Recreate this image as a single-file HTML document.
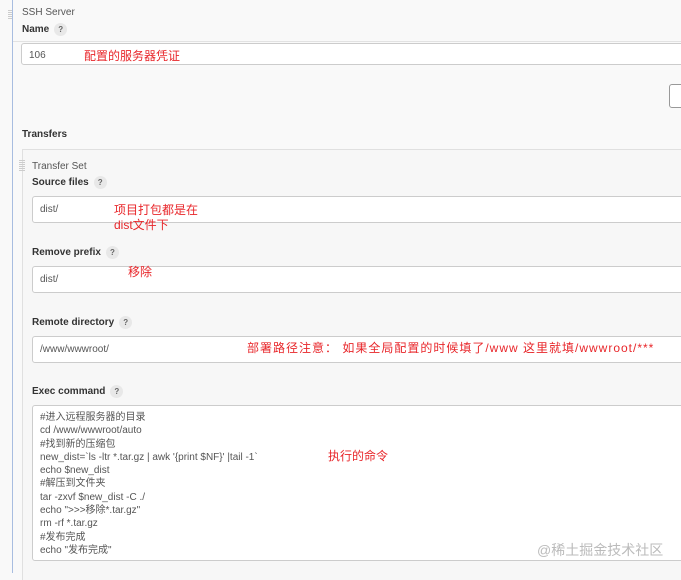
<!DOCTYPE html>
<html><head><meta charset="utf-8"><style>
body{margin:0;width:681px;height:573px;background:#f9f9f9;font-family:"Liberation Sans","Noto Sans CJK SC",sans-serif;position:relative;overflow:hidden;color:#333}
.a{position:absolute}
.lbl{font-size:10px;font-weight:bold;color:#333}
.q{display:inline-block;width:13px;height:13px;border-radius:50%;background:#e8e8e8;color:#666;font-size:8px;text-align:center;line-height:13px;margin-left:5px;font-weight:bold}
.in{position:absolute;background:#fff;border:1px solid #ccc;border-radius:3px;font-size:10px;color:#555;box-sizing:border-box;padding-left:7px}
.red{position:absolute;color:#e8262a;font-size:12px}
.sm{font-size:10px;color:#555}
</style></head><body>
<div class="a" style="left:12px;top:0;width:1px;height:573px;background:#a8bde0"></div>
<div class="a" style="left:8px;top:10px;width:4px;height:9px;background:repeating-linear-gradient(#ccc 0 1px,transparent 1px 2px)"></div>
<div class="a sm" style="left:22px;top:7px">SSH Server</div>
<div class="a lbl" style="left:22px;top:23px">Name<span class="q">?</span></div>
<div class="in" style="left:21px;top:43px;width:670px;height:22px;line-height:23px">106</div>
<div class="red" style="left:84px;top:47px">配置的服务器凭证</div>
<div class="a" style="left:669px;top:84px;width:14px;height:22px;border:1px solid #999;border-radius:3px;background:#fff"></div>
<div class="a" style="left:13px;top:41px;width:680px;height:1px;background:#e2e2e2"></div>
<div class="a lbl" style="left:22px;top:129px">Transfers</div>
<div class="a" style="left:22px;top:149px;width:670px;height:430px;border-left:1px solid #e0e0e0;border-top:1px solid #e0e0e0;background:#f7f7f7"></div>
<div class="a" style="left:19px;top:160px;width:6px;height:12px;background:repeating-linear-gradient(#ccc 0 1px,transparent 1px 2px)"></div>
<div class="a sm" style="left:32px;top:161px">Transfer Set</div>
<div class="a lbl" style="left:32px;top:176px">Source files<span class="q">?</span></div>
<div class="in" style="left:32px;top:196px;width:660px;height:27px;line-height:26px">dist/</div>
<div class="red" style="left:114px;top:203px;line-height:15px">项目打包都是在<br>dist文件下</div>
<div class="a lbl" style="left:32px;top:246px">Remove prefix<span class="q">?</span></div>
<div class="in" style="left:32px;top:266px;width:660px;height:27px;line-height:26px">dist/</div>
<div class="red" style="left:128px;top:263px">移除</div>
<div class="a lbl" style="left:32px;top:316px">Remote directory<span class="q">?</span></div>
<div class="in" style="left:32px;top:336px;width:660px;height:27px;line-height:26px">/www/wwwroot/</div>
<div class="red" style="left:247px;top:339px;letter-spacing:1px">部署路径注意： 如果全局配置的时候填了/www 这里就填/wwwroot/***</div>
<div class="a lbl" style="left:32px;top:385px">Exec command<span class="q">?</span></div>
<div class="in" style="left:32px;top:405px;width:660px;height:156px;padding-top:5px;line-height:13.3px;white-space:pre">#进入远程服务器的目录
cd /www/wwwroot/auto
#找到新的压缩包
new_dist=`ls -ltr *.tar.gz | awk '{print $NF}' |tail -1`
echo $new_dist
#解压到文件夹
tar -zxvf $new_dist -C ./
echo "&gt;&gt;&gt;移除*.tar.gz"
rm -rf *.tar.gz
#发布完成
echo "发布完成"</div>
<div class="red" style="left:328px;top:447px">执行的命令</div>
<div class="a" style="left:537px;top:540px;font-size:14px;color:#bbb">@稀土掘金技术社区</div>
</body></html>
